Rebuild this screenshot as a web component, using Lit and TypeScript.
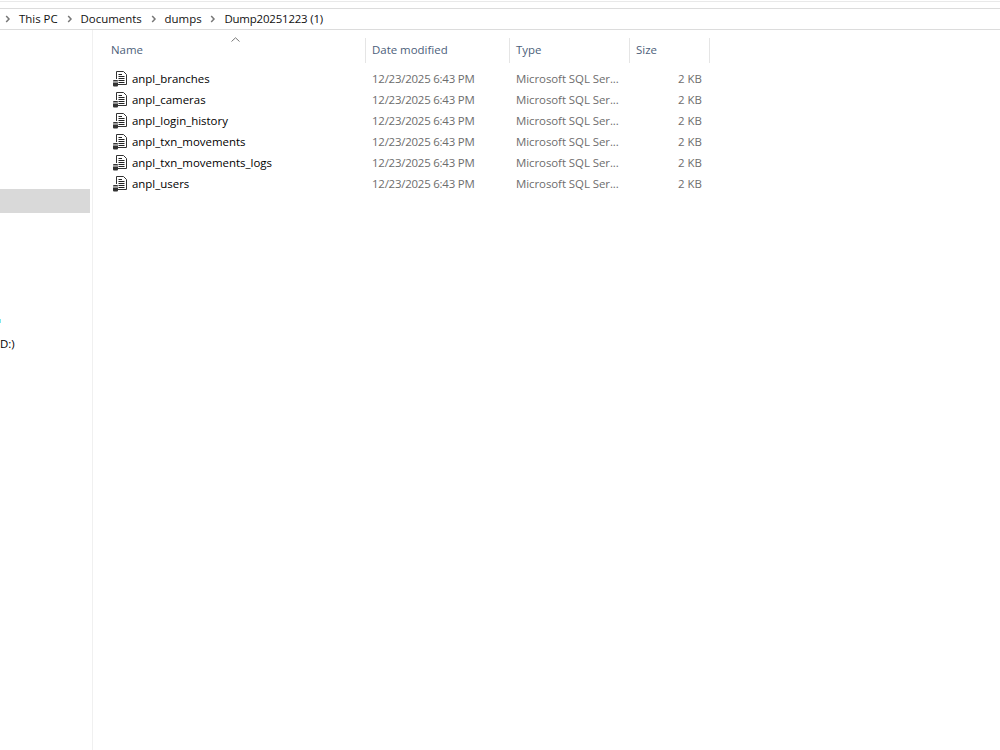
import { LitElement, html, css, svg } from "lit";
import { customElement } from "lit/decorators.js";

const files = [
  "anpl_branches",
  "anpl_cameras",
  "anpl_login_history",
  "anpl_txn_movements",
  "anpl_txn_movements_logs",
  "anpl_users",
];
const crumbs = ["This PC", "Documents", "dumps", "Dump20251223 (1)"];

const chevron = svg`<svg class="chev" width="6" height="8" viewBox="0 0 6 8"><path d="M1.2 1 4 4 1.2 7" fill="none" stroke="#777" stroke-width="1.5"/></svg>`;

const fileIcon = svg`<svg class="ficon" width="16" height="16" viewBox="0 0 16 16">
  <path d="M4.5 8V.5H11.5L14.5 3.5V13.5H6" fill="#fff" stroke="#333" stroke-width="1"/>
  <path d="M6.5 3.5H10M6.5 5.5H12.5M6.5 7.5H12.5M6.5 9.5H12.5M6.5 11.5H12.5" stroke="#222" stroke-width="1"/>
  <rect x="1" y="9" width="5" height="6.5" rx="1" fill="#333"/>
  <rect x="1" y="10.3" width="5" height="1.3" fill="#cfcfcf"/>
</svg>`;

@customElement("app-root")
export class AppRoot extends LitElement {
  static styles = css`
    :host {
      display: block;
      width: 1000px;
      height: 750px;
      background: #fff;
      overflow: hidden;
      font-family: "Open Sans", "Noto Sans", sans-serif;
      font-size: 11.45px;
      color: #111;
    }
    .ribbon {
      height: 8px;
      box-sizing: border-box;
      border-top: 1px solid #e9e9e9;
      margin-top: 1px;
      border-bottom: 1px solid #dcdcdc;
    }
    .crumbs {
      height: 20px;
      border-bottom: 1px solid #dcdcdc;
      display: flex;
      align-items: center;
      padding-left: 5px;
    }
    .crumb {
      margin-left: 8px;
      margin-right: 8.8px;
      line-height: 20px;
      white-space: nowrap;
    }
    .crumb.last {
      letter-spacing: -0.18px;
    }
    .main {
      display: flex;
      height: 720px;
    }
    .side {
      width: 90px;
      padding-top: 159px;
      flex: none;
    }
    .sel {
      height: 24px;
      background: #d9d9d9;
    }
    .cyan {
      width: 1px;
      height: 4px;
      margin-top: 106px;
      background: #7fe9f0;
    }
    .drive {
      margin-top: 13px;
      line-height: 16px;
      color: #000;
    }
    .split {
      width: 1px;
      margin-left: 2px;
      background: #f0f0f0;
      flex: none;
    }
    .list {
      flex: 1;
      padding-top: 8px;
    }
    .row {
      display: grid;
      grid-template-columns: 273px 144px 120px 80px;
      height: 21px;
      align-items: center;
    }
    .head {
      height: 25px;
      margin-bottom: 5px;
      position: relative;
      color: #4c607a;
    }
    .head .cell {
      height: 25px;
      line-height: 23px;
      border-right: 1px solid #e5e5e5;
      box-sizing: border-box;
      padding-left: 6px;
    }
    .head .cell:first-child {
      padding-left: 18px;
    }
    .sort {
      position: absolute;
      left: 138px;
      top: -1px;
    }
    .name {
      display: flex;
      align-items: center;
      padding-left: 19px;
      color: #000;
    }
    .ficon {
      margin-right: 4px;
      flex: none;
    }
    .dim {
      color: #6d6d6d;
      padding-left: 6px;
      white-space: nowrap;
    }
    .dim.date {
      letter-spacing: -0.22px;
    }
    .dim.type {
      letter-spacing: -0.06px;
    }
    .size {
      text-align: right;
      padding-right: 8px;
      color: #6d6d6d;
    }
  `;

  render() {
    return html`
      <div class="ribbon"></div>
      <div class="crumbs">
        ${crumbs.map(
          (c, i) =>
            html`${chevron}<span class="crumb ${i === crumbs.length - 1 ? "last" : ""}">${c}</span>`
        )}
      </div>
      <div class="main">
        <div class="side">
          <div class="sel"></div>
          <div class="cyan"></div>
          <div class="drive">D:)</div>
        </div>
        <div class="split"></div>
        <div class="list">
          <div class="row head">
            <div class="cell">Name</div>
            <div class="cell">Date modified</div>
            <div class="cell">Type</div>
            <div class="cell">Size</div>
            <svg class="sort" width="9" height="5" viewBox="0 0 9 5"><path d="M.5 4.5 4.5 .8 8.5 4.5" fill="none" stroke="#777" stroke-width="1"/></svg>
          </div>
          ${files.map(
            (f) => html`
              <div class="row">
                <div class="name">${fileIcon}<span>${f}</span></div>
                <div class="dim date">12/23/2025 6:43 PM</div>
                <div class="dim type">Microsoft SQL Ser...</div>
                <div class="size">2 KB</div>
              </div>
            `
          )}
        </div>
      </div>
    `;
  }
}
